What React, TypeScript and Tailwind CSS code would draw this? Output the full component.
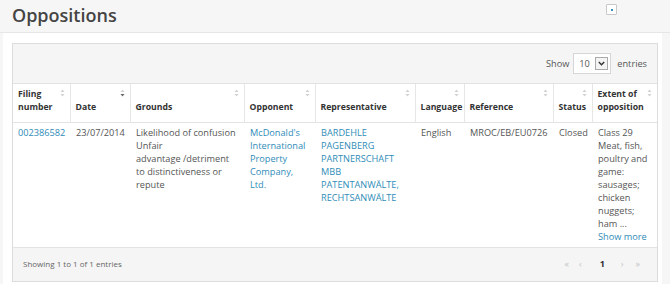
const cols = [57, 60, 114, 71, 100, 49, 89, 39];

function SortIcon({ active = false }: { active?: boolean }) {
  return (
    <svg
      width="5"
      height="8"
      viewBox="0 0 5 8"
      className="absolute right-[5px] top-[5px]"
    >
      <polygon points="0.5,3 2.5,0.5 4.5,3" fill="#d2d2d2" />
      <polygon points="0.5,5 2.5,7.5 4.5,5" fill={active ? '#666' : '#d2d2d2'} />
    </svg>
  );
}

function Th({ lines, active, last }: { lines: string[]; active?: boolean; last?: boolean }) {
  return (
    <th
      className={`relative h-[38px] p-0 text-left align-bottom font-bold ${
        last ? '' : 'border-r border-[#e6e6e6]'
      }`}
    >
      <div className="px-[5px] pb-[8px] text-[8.7px] leading-[13px] text-[#333]">
        {lines.map((l) => (
          <div key={l} className="whitespace-nowrap">
            {l}
          </div>
        ))}
      </div>
      <SortIcon active={active} />
    </th>
  );
}

function Cell({ lines, link, first }: { lines: string[]; link?: boolean; first?: boolean }) {
  return (
    <td
      className={`pb-[4px] pt-[3px] align-top ${first ? 'pl-[5px]' : 'pl-[6px]'} pr-[4px] text-[9.2px] leading-[13px] ${
        link ? 'text-[#2f8cb8]' : 'text-[#555]'
      }`}
    >
      {lines.map((l, i) => (
        <div key={i} className="whitespace-nowrap">
          {l}
        </div>
      ))}
    </td>
  );
}

export default function App() {
  return (
    <div
      className="h-[284px] w-[670px] overflow-hidden bg-[#f6f6f6]"
      style={{ fontFamily: '"Open Sans", "Liberation Sans", sans-serif' }}
    >
      <div className="flex h-[33px] items-center justify-between border-b border-[#e6e6e6] pl-[12px] pr-[53px]">
        <h1 className="-mt-[2px] text-[18px] font-semibold text-[#444]">Oppositions</h1>
        <button className="-mt-[13px] flex h-[11px] w-[11px] items-center justify-center rounded-[1px] border border-[#c8c8c8] bg-white">
          <span className="block h-[2px] w-[2px] bg-[#3a8fb7]" />
        </button>
      </div>

      <div className="ml-[3px] mr-[8px] h-[251px] bg-white pl-[9px] pr-[4px] pt-[10px]">
        <div className="overflow-hidden border border-[#dcdcdc]">
          <div className="flex h-[40px] items-center justify-end gap-[4px] border-b border-[#e3e3e3] bg-[#f5f5f5] pr-[10px] text-[9.2px] text-[#555]">
            <span>Show</span>
            <div className="flex h-[21px] w-[38px] items-center justify-between border border-[#d6d6d6] bg-white pl-[5px] pr-[2px]">
              <span>10</span>
              <span className="flex h-[13px] w-[13px] items-center justify-center border border-[#aaa] bg-[#f4f4f4]">
                <svg width="7" height="5" viewBox="0 0 7 5">
                  <polyline
                    points="0.8,1 3.5,3.8 6.2,1"
                    fill="none"
                    stroke="#333"
                    strokeWidth="1.4"
                  />
                </svg>
              </span>
            </div>
            <span className="ml-[2px]">entries</span>
          </div>

          <table className="w-full table-fixed border-collapse">
            <colgroup>
              {cols.map((w, i) => (
                <col key={i} style={{ width: w }} />
              ))}
              <col />
            </colgroup>
            <thead>
              <tr className="border-b border-[#e3e3e3] bg-white">
                <Th lines={['Filing', 'number']} />
                <Th lines={['Date']} active />
                <Th lines={['Grounds']} />
                <Th lines={['Opponent']} />
                <Th lines={['Representative']} />
                <Th lines={['Language']} />
                <Th lines={['Reference']} />
                <Th lines={['Status']} />
                <Th lines={['Extent of', 'opposition']} last />
              </tr>
            </thead>
            <tbody>
              <tr className="bg-white">
                <Cell lines={['002386582']} link first />
                <Cell lines={['23/07/2014']} />
                <Cell
                  lines={[
                    'Likelihood of confusion',
                    'Unfair',
                    'advantage /detriment',
                    'to distinctiveness or',
                    'repute',
                  ]}
                />
                <Cell
                  lines={["McDonald's", 'International', 'Property', 'Company,', 'Ltd.']}
                  link
                />
                <Cell
                  lines={[
                    'BARDEHLE',
                    'PAGENBERG',
                    'PARTNERSCHAFT',
                    'MBB',
                    'PATENTANWÄLTE,',
                    'RECHTSANWÄLTE',
                  ]}
                  link
                />
                <Cell lines={['English']} />
                <Cell lines={['MROC/EB/EU0726']} />
                <Cell lines={['Closed']} />
                <td className="pb-[4px] pl-[6px] pt-[3px] align-top text-[9.2px] leading-[13px] text-[#555]">
                  {[
                    'Class 29',
                    'Meat, fish,',
                    'poultry and',
                    'game:',
                    'sausages;',
                    'chicken',
                    'nuggets;',
                    'ham ...',
                  ].map((l) => (
                    <div key={l} className="whitespace-nowrap">
                      {l}
                    </div>
                  ))}
                  <div className="whitespace-nowrap text-[#2f8cb8]">Show more</div>
                </td>
              </tr>
            </tbody>
          </table>

          <div className="flex h-[34px] items-center justify-between border-t border-[#e3e3e3] bg-[#f5f5f5] pl-[10px] pr-[17px]">
            <span className="text-[8px] text-[#666]">Showing 1 to 1 of 1 entries</span>
            <div className="flex items-center text-[9px] text-[#c4c4c4]">
              <span>«</span>
              <span className="ml-[10px]">‹</span>
              <span className="ml-[18px] font-bold text-[#333]">1</span>
              <span className="ml-[16px]">›</span>
              <span className="ml-[12px]">»</span>
            </div>
          </div>
        </div>
      </div>
    </div>
  );
}
